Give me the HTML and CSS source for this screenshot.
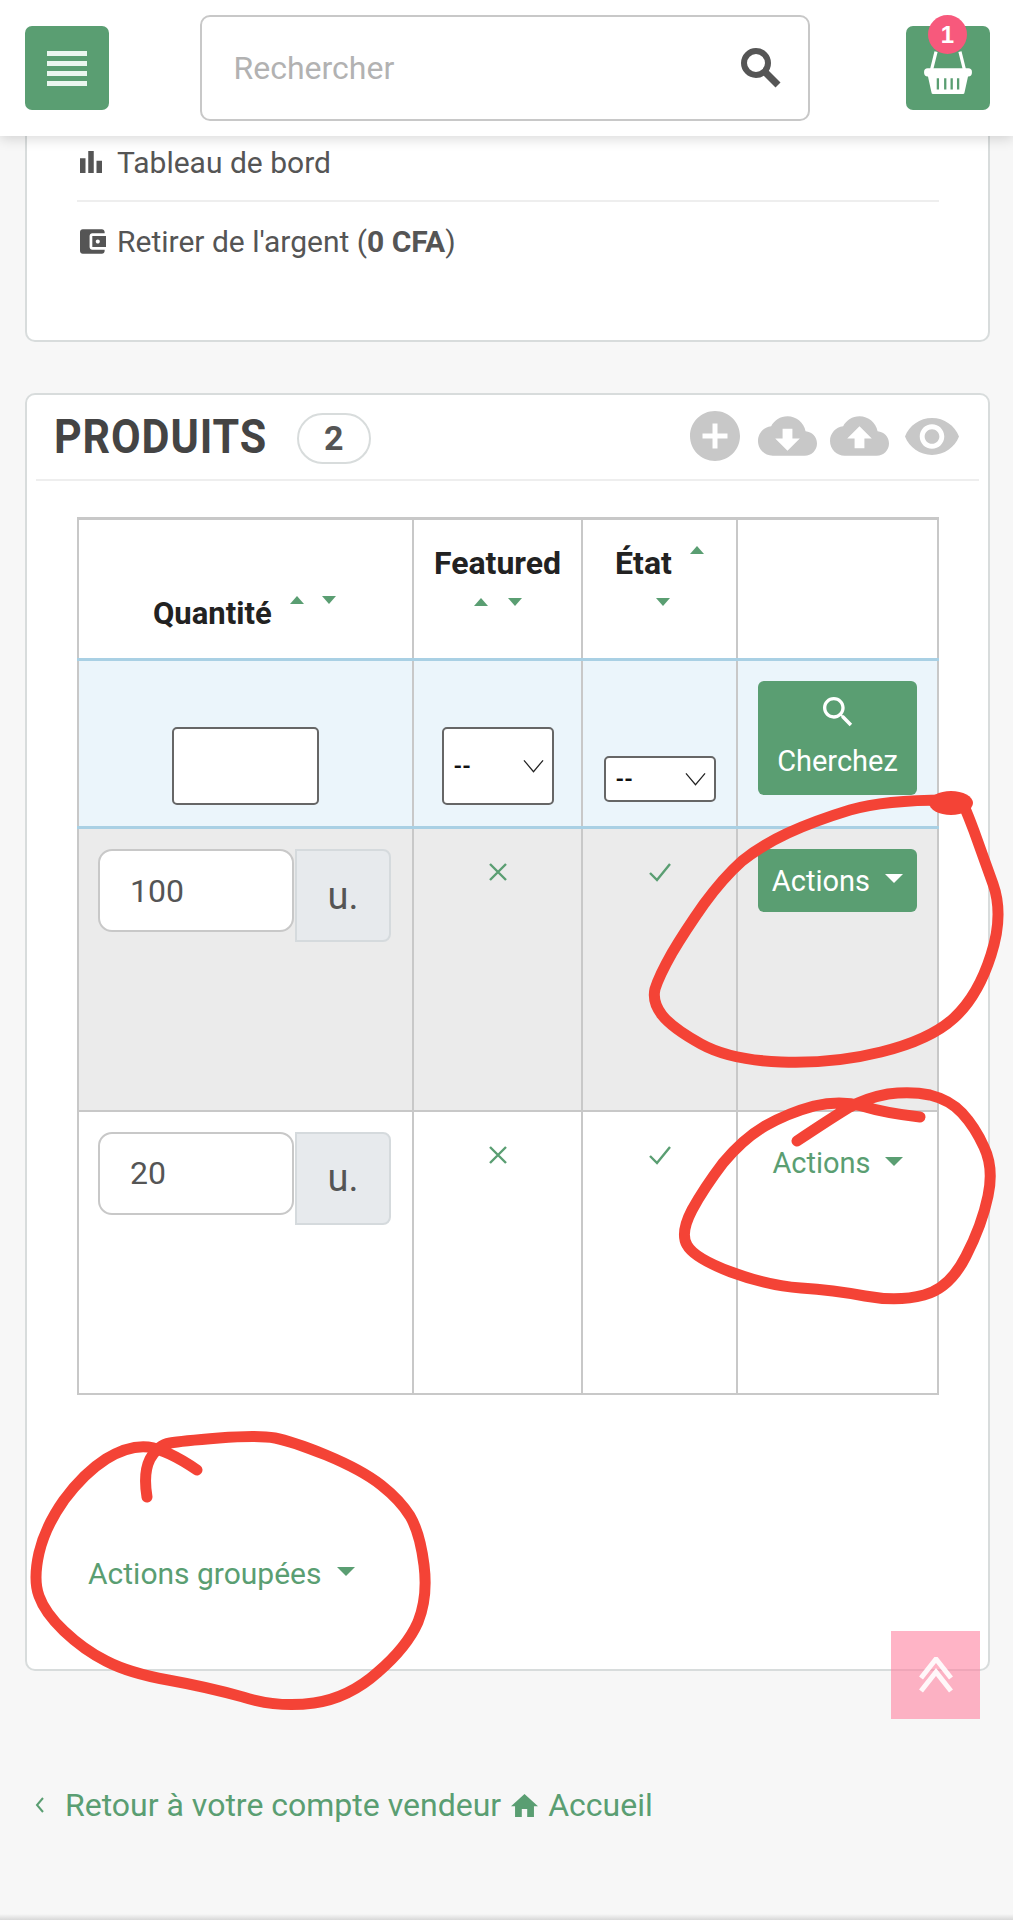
FILE: index.html
```html
<!DOCTYPE html>
<html lang="fr">

<head>
    <meta charset="UTF-8">
    <meta name="viewport" content="width=device-width, initial-scale=1.0">
    <title>Produits</title>
    <link rel="stylesheet" href="styles.css">
</head>

<body>
    <!-- Top bar -->
    <header class="topbar">
        <button class="square-btn" aria-label="Menu">
            <span class="menu-bars"><i></i><i></i><i></i><i></i></span>
        </button>
        <div class="search-box">
            <span class="search-text">Rechercher</span>
            <svg class="search-icon" viewBox="0 0 42 42">
                <circle cx="16" cy="16" r="12" fill="none" stroke="#555" stroke-width="6" />
                <path d="M25 25 38 38" fill="none" stroke="#555" stroke-width="7" />
            </svg>
        </div>
        <button class="square-btn cart-btn" aria-label="Panier">
            <svg class="basket" viewBox="0 0 52 50">
                <path d="M13 4 8 24M39 4l5 20" fill="none" stroke="#fff" stroke-width="3.5" />
                <rect x="0" y="22" width="52" height="9" rx="4" fill="#fff" />
                <path d="M4 30h44l-4 18a2 2 0 0 1-2 2H10a2 2 0 0 1-2-2z" fill="#fff" />
                <path d="M15 33v12M23 33v12M30 33v12M37 33v12" stroke="#5a9e72" stroke-width="2.5" />
            </svg>
            <span class="cart-count">1</span>
        </button>
    </header>

    <main class="content">
        <!-- Seller menu card -->
        <section class="card menu-card">
            <a class="menu-row">
                <svg class="menu-icon icon-bars" viewBox="3 3 18 18"><path d="M3 9h4.500v12H3zM9.750 3h4.500v18h-4.500zM16.500 11H21v10h-4.500z" /></svg>
                <span>Tableau de bord</span>
            </a>
            <a class="menu-row">
                <svg class="menu-icon icon-wallet" viewBox="3 3 19 18"><path d="M21 18v1c0 1.100-.9 2-2 2H5c-1.110 0-2-.9-2-2V5c0-1.100.89-2 2-2h14c1.100 0 2 .9 2 2v1h-9c-1.110 0-2 .9-2 2v8c0 1.100.89 2 2 2h9zm-9-2h10V8H12v8zm4-2.500c-.83 0-1.500-.67-1.500-1.500s.67-1.500 1.500-1.500 1.500.67 1.500 1.500-.67 1.500-1.500 1.500z" /></svg>
                <span>Retirer de l'argent (<b>0 CFA</b>)</span>
            </a>
        </section>

        <!-- Products card -->
        <section class="card products-card">
            <div class="card-head">
                <h2>PRODUITS</h2>
                <span class="count-pill">2</span>
                <div class="head-tools">
                    <svg class="tool-plus" viewBox="2 2 20 20"><path d="M12 2C6.480 2 2 6.480 2 12s4.480 10 10 10 10-4.480 10-10S17.520 2 12 2zm5 11h-4v4h-2v-4H7v-2h4V7h2v4h4v2z" /></svg>
                    <svg class="tool-cloud" viewBox="0 4 24 16"><path d="M19.350 10.040C18.670 6.590 15.640 4 12 4 9.110 4 6.600 5.640 5.350 8.040 2.340 8.360 0 10.910 0 14c0 3.310 2.690 6 6 6h13c2.760 0 5-2.240 5-5 0-2.640-2.050-4.780-4.650-4.960zM17 13l-5 5-5-5h3V9h4v4h3z" /></svg>
                    <svg class="tool-cloud" viewBox="0 4 24 16"><path d="M19.350 10.040C18.670 6.590 15.640 4 12 4 9.110 4 6.600 5.640 5.350 8.040 2.340 8.360 0 10.910 0 14c0 3.310 2.690 6 6 6h13c2.760 0 5-2.240 5-5 0-2.640-2.050-4.780-4.650-4.960zM14 13v4h-4v-4H7l5-5 5 5h-3z" /></svg>
                    <svg class="tool-eye" viewBox="1 4.500 22 15"><path d="M12 4.500C7 4.500 2.730 7.610 1 12c1.730 4.390 6 7.500 11 7.500s9.270-3.110 11-7.500c-1.730-4.390-6-7.500-11-7.500zM12 17c-2.760 0-5-2.240-5-5s2.240-5 5-5 5 2.240 5 5-2.240 5-5 5zm0-8c-1.660 0-3 1.340-3 3s1.340 3 3 3 3-1.340 3-3-1.340-3-3-3z" /></svg>
                </div>
            </div>

            <table class="products-table">
                <colgroup>
                    <col class="col-qty">
                    <col class="col-featured">
                    <col class="col-state">
                    <col class="col-actions">
                </colgroup>
                <thead>
                    <tr class="head-row">
                        <th>
                            <div class="th-inline">Quantité <span class="sort-up"></span><span class="sort-down"></span></div>
                        </th>
                        <th>
                            <div class="th-stack">Featured
                                <div class="sort-pair"><span class="sort-up"></span><span class="sort-down"></span></div>
                            </div>
                        </th>
                        <th>
                            <div class="th-stack">
                                <div class="state-title">État <span class="sort-up"></span></div>
                                <div class="sort-pair state-down"><span class="sort-down"></span></div>
                            </div>
                        </th>
                        <th></th>
                    </tr>
                    <tr class="filter-row">
                        <td class="filter-qty"><input class="filter-input" type="text"></td>
                        <td>
                            <div class="select-wrap tall">
                                <span>--</span>
                                <svg viewBox="0 0 22 14"><path d="M1 1 11 13 21 1" fill="none" stroke="#222" stroke-width="1.300" /></svg>
                            </div>
                        </td>
                        <td>
                            <div class="select-wrap short">
                                <span>--</span>
                                <svg viewBox="0 0 22 14"><path d="M1 1 11 13 21 1" fill="none" stroke="#222" stroke-width="1.300" /></svg>
                            </div>
                        </td>
                        <td class="filter-action">
                            <button class="green-btn search-btn">
                                <svg viewBox="3 3 18 18"><path d="M15.500 14h-.79l-.28-.27C15.410 12.590 16 11.110 16 9.500 16 5.910 13.090 3 9.500 3S3 5.910 3 9.500 5.910 16 9.500 16c1.610 0 3.090-.59 4.230-1.570l.27.28v.79l5 4.990L20.490 19l-4.990-5zm-6 0C7.010 14 5 11.990 5 9.500S7.010 5 9.500 5 14 7.010 14 9.500 11.990 14 9.500 14z" /></svg>
                                Cherchez
                            </button>
                        </td>
                    </tr>
                </thead>
                <tbody>
                    <tr class="item-row odd">
                        <td>
                            <div class="qty-group">
                                <span class="qty-value">100</span>
                                <span class="qty-unit">u.</span>
                            </div>
                        </td>
                        <td class="mark-cell"><svg class="mark" viewBox="0 0 20 20"><path d="M2 2 18 18M18 2 2 18" /></svg></td>
                        <td class="mark-cell"><svg class="mark check" viewBox="0 0 24 20"><path d="M2 11 9 18 22 2" /></svg></td>
                        <td class="action-cell"><button class="green-btn action-btn">Actions <span class="caret"></span></button></td>
                    </tr>
                    <tr class="item-row">
                        <td>
                            <div class="qty-group">
                                <span class="qty-value">20</span>
                                <span class="qty-unit">u.</span>
                            </div>
                        </td>
                        <td class="mark-cell"><svg class="mark" viewBox="0 0 20 20"><path d="M2 2 18 18M18 2 2 18" /></svg></td>
                        <td class="mark-cell"><svg class="mark check" viewBox="0 0 24 20"><path d="M2 11 9 18 22 2" /></svg></td>
                        <td class="action-cell"><a class="action-link">Actions <span class="caret"></span></a></td>
                    </tr>
                </tbody>
            </table>

            <a class="bulk-actions">Actions groupées <span class="caret"></span></a>
        </section>

        <!-- Links under the card -->
        <nav class="back-links">
            <svg class="back-chevron" viewBox="0 0 10 18"><path d="M8 2 2 9l6 7" /></svg>
            <a>Retour à votre compte vendeur</a>
            <svg class="home-icon" viewBox="2 3 20 17"><path d="M10 20v-6h4v6h5v-8h3L12 3 2 12h3v8z" /></svg>
            <a>Accueil</a>
        </nav>
    </main>

    <div class="page-end"></div>

    <!-- Back to top -->
    <a class="to-top" aria-label="Haut de page">
        <svg viewBox="0 0 36 36"><path d="M3 21 18 2l15 19M3 34l15-19 15 19" /></svg>
    </a>

    <!-- Red marks drawn by hand over the screenshot -->
    <svg class="scribbles" viewBox="0 0 1013 1920">
        <path d="M946 800Q885 800 850 810Q814 821 788 833Q762 845 742 861Q723 878 704 904Q685 931 672 953Q659 976 655 989Q652 1002 662 1015Q672 1028 701 1044Q730 1060 781 1062Q833 1064 881 1052Q930 1040 954 1018Q978 996 991 955Q1004 915 993 884Q982 853 974 831Q968 815 964 806" />
        <ellipse cx="951" cy="803" rx="22" ry="12" />
        <path d="M920 1117Q885 1113 862 1106Q840 1100 814 1106Q788 1113 765 1126Q743 1139 723 1163Q704 1188 692 1210Q680 1233 687 1245Q694 1258 731 1272Q769 1286 801 1288Q833 1290 865 1296Q898 1302 924 1295Q950 1288 966 1256Q982 1225 988 1196Q994 1168 984 1147Q975 1127 962 1113Q950 1100 930 1095Q911 1091 888 1094Q866 1098 848 1108Q830 1119 797 1141" />
        <path d="M147 1497Q143 1473 150 1459Q158 1445 170 1443Q181 1441 219 1438Q258 1435 275 1438Q291 1441 326 1455Q362 1470 381 1485Q400 1500 410 1516Q420 1533 424 1565Q428 1597 418 1622Q407 1647 378 1672Q349 1698 314 1703Q278 1708 243 1697Q207 1687 168 1680Q129 1673 106 1661Q84 1650 64 1631Q45 1613 39 1596Q33 1580 39 1553Q45 1527 64 1500Q84 1473 106 1459Q129 1445 148 1447Q168 1450 197 1470" />
    </svg>
</body>

</html>
```

FILE: styles.css
```css
* {
    box-sizing: border-box;
}

body {
    position: relative;
    display: flex;
    flex-direction: column;
    width: 1013px;
    height: 1920px;
    margin: 0;
    overflow: hidden;
    background-color: #f7f7f7;
    font-family: Roboto, "Liberation Sans", sans-serif;
    color: #555;
}

/* Top bar */
.topbar {
    position: relative;
    z-index: 2;
    display: flex;
    flex-shrink: 0;
    align-items: center;
    justify-content: space-between;
    height: 136px;
    padding: 0 23px 0 25px;
    background-color: #fff;
    box-shadow: 0 3px 12px rgba(0, 0, 0, 0.15);
}

.square-btn {
    position: relative;
    display: flex;
    align-items: center;
    justify-content: center;
    width: 84px;
    height: 84px;
    padding: 0;
    background-color: #5a9e72;
    border: none;
    border-radius: 7px;
}

.menu-bars {
    display: flex;
    flex-direction: column;
    gap: 5px;
    width: 40px;
}

.menu-bars i {
    display: block;
    height: 5px;
    background-color: #eaf6ef;
}

.search-box {
    display: flex;
    align-items: center;
    justify-content: space-between;
    width: 610px;
    height: 106px;
    margin-right: 6px;
    padding: 0 26px 0 32px;
    border: 2px solid #c8c8c8;
    border-radius: 10px;
}

.search-text {
    font-size: 32px;
    color: #b2b2b2;
}

.search-icon {
    width: 42px;
    height: 42px;
}

.basket {
    width: 48px;
    height: 46px;
    margin-top: 6px;
}

.cart-count {
    position: absolute;
    top: -11px;
    left: 22px;
    display: flex;
    align-items: center;
    justify-content: center;
    width: 39px;
    height: 39px;
    font-size: 24px;
    font-weight: 700;
    color: #fff;
    background-color: #f7597c;
    border-radius: 50%;
}

/* Cards */
.content {
    display: flex;
    flex-direction: column;
    padding: 0 23px 0 25px;
}

.card {
    background-color: #fff;
    border: 2px solid #d8dcdc;
    border-radius: 10px;
}

.menu-card {
    height: 206px;
    padding: 0 49px 0 50px;
    border-top: none;
    border-radius: 0 0 10px 10px;
}

.menu-row {
    display: flex;
    align-items: center;
    padding-left: 3px;
    font-size: 30px;
    color: #555;
}

.menu-row:first-child {
    height: 66px;
    padding-bottom: 12px;
    border-bottom: 2px solid #eee;
}

.menu-row + .menu-row {
    height: 78px;
    padding-top: 1px;
}

.menu-icon {
    flex-shrink: 0;
    fill: #555;
}

.icon-bars {
    width: 22px;
    height: 22px;
    margin-right: 15px;
}

.icon-wallet {
    width: 26px;
    height: 25px;
    margin-right: 11px;
}

.products-card {
    height: 1278px;
    margin-top: 51px;
    padding: 0 9px;
}

.card-head {
    display: flex;
    align-items: center;
    height: 86px;
    padding: 0 20px 2px 18px;
    border-bottom: 2px solid #eee;
}

.card-head h2 {
    margin: 0 -29px 0 0;
    font-size: 49px;
    font-weight: 700;
    letter-spacing: 1px;
    color: #444;
    transform: scaleX(0.878);
    transform-origin: left center;
}

.count-pill {
    display: flex;
    align-items: center;
    justify-content: center;
    width: 74px;
    height: 51px;
    margin: 4px 0 0 29px;
    font-size: 34px;
    font-weight: 700;
    color: #555;
    border: 2px solid #d8dcdc;
    border-radius: 26px;
}

.head-tools {
    display: flex;
    align-items: center;
    margin-left: auto;
    fill: #c8c8c8;
}

.tool-plus {
    width: 50px;
    height: 50px;
}

.tool-cloud {
    width: 59px;
    height: 40px;
    margin-left: 13px;
}

.tool-plus + .tool-cloud {
    margin-left: 18px;
}

.tool-eye {
    width: 54px;
    height: 37px;
    margin-left: 16px;
}

/* Table */
.products-table {
    width: 860px;
    margin: 36px 0 0 41px;
    border-collapse: collapse;
    table-layout: fixed;
}

.col-qty {
    width: 335px;
}

.col-featured {
    width: 169px;
}

.col-state {
    width: 155px;
}

.col-actions {
    width: 201px;
}

.products-table th,
.products-table td {
    padding: 0;
    border: 2px solid #c8c8c8;
}

.head-row th {
    height: 141px;
    vertical-align: bottom;
    font-size: 32px;
    font-weight: 700;
    color: #222;
    border-top-width: 3px;
    border-bottom: 3px solid #a9d0e4;
}

.th-inline {
    display: flex;
    align-items: center;
    gap: 18px;
    padding: 0 0 26px 74px;
    font-size: 31px;
}

.th-inline .sort-up,
.th-inline .sort-down {
    margin-bottom: 28px;
}

.th-stack {
    display: flex;
    flex-direction: column;
    align-items: center;
    padding-bottom: 52px;
}

.sort-pair {
    display: flex;
    gap: 20px;
    margin-top: 16px;
}

.state-title {
    display: flex;
    align-items: flex-start;
    gap: 18px;
}

.state-title .sort-up {
    margin-top: 2px;
}

.state-down {
    margin-left: 6px;
}

.sort-up,
.sort-down {
    display: inline-block;
    width: 0;
    height: 0;
    border-left: 7px solid transparent;
    border-right: 7px solid transparent;
}

.sort-up {
    border-bottom: 8px solid #5a9e72;
}

.sort-down {
    border-top: 8px solid #5a9e72;
}

.filter-row td {
    height: 168px;
    vertical-align: bottom;
    text-align: center;
    background-color: #ebf5fb;
    border-bottom: 3px solid #a9d0e4;
}

.filter-input {
    display: block;
    width: 147px;
    height: 78px;
    margin: 0 0 21px 93px;
    background-color: #fff;
    border: 2px solid #666;
    border-radius: 5px;
}

.select-wrap {
    display: flex;
    align-items: center;
    justify-content: space-between;
    width: 112px;
    margin: 0 auto;
    padding: 0 8px 0 10px;
    font-size: 22px;
    font-weight: 700;
    color: #111;
    background-color: #fff;
    border: 2px solid #666;
    border-radius: 5px;
}

.select-wrap.tall {
    height: 78px;
    margin-bottom: 21px;
}

.select-wrap.short {
    height: 46px;
    margin-bottom: 24px;
}

.select-wrap svg {
    width: 21px;
    height: 14px;
}

.filter-action.filter-action {
    vertical-align: top;
    padding: 20px 20px 0;
}

.green-btn {
    width: 159px;
    padding: 0;
    font-family: inherit;
    font-size: 29px;
    color: #fff;
    background-color: #5a9e72;
    border: none;
    border-radius: 6px;
}

.search-btn {
    display: flex;
    flex-direction: column;
    align-items: center;
    gap: 17px;
    height: 114px;
    padding-top: 16px;
    line-height: 34px;
}

.search-btn svg {
    width: 30px;
    height: 30px;
    fill: #fff;
}

.item-row td {
    height: 283px;
    vertical-align: top;
}

.item-row.odd td {
    background-color: #ebebeb;
}

.qty-group {
    display: flex;
    align-items: flex-start;
    gap: 1px;
    padding: 20px 0 0 19px;
}

.qty-value {
    display: flex;
    align-items: center;
    width: 196px;
    height: 83px;
    padding-left: 30px;
    font-size: 32px;
    color: #555;
    background-color: #fff;
    border: 2px solid #c8c8c8;
    border-radius: 14px;
}

.qty-unit {
    display: flex;
    align-items: center;
    justify-content: center;
    width: 96px;
    height: 93px;
    font-size: 38px;
    color: #555;
    background-color: #e7eaed;
    border: 2px solid #d5dadd;
    border-radius: 0 8px 8px 0;
}

.mark-cell {
    text-align: center;
}

.mark {
    display: block;
    width: 20px;
    height: 20px;
    margin: 33px auto 0;
    fill: none;
    stroke: #5a9e72;
    stroke-width: 2.4;
}

.mark.check {
    width: 24px;
}

.products-table .action-cell {
    padding: 20px 20px 0;
}

.action-btn {
    height: 63px;
}

.caret {
    display: inline-block;
    width: 0;
    height: 0;
    margin-left: 8px;
    vertical-align: 8px;
    border-left: 9px solid transparent;
    border-right: 9px solid transparent;
    border-top: 9px solid currentColor;
}

.action-link {
    display: flex;
    align-items: center;
    justify-content: center;
    height: 63px;
    font-size: 29px;
    color: #5a9e72;
}

.action-link .caret {
    margin: 0 0 4px 14px;
}

.bulk-actions {
    display: block;
    margin: 161px 0 0 52px;
    font-size: 30px;
    color: #5a9e72;
}

/* Links under the card */
.back-links {
    display: flex;
    align-items: center;
    gap: 10px;
    margin: 115px 0 0 10px;
    font-size: 32px;
    color: #5a9e72;
}

.back-chevron {
    width: 10px;
    height: 18px;
    margin-right: 10px;
    fill: none;
    stroke: #5a9e72;
    stroke-width: 2;
}

.home-icon {
    width: 27px;
    height: 23px;
    fill: #5a9e72;
}

.page-end {
    height: 6px;
    margin-top: auto;
    background: linear-gradient(#f7f7f7, #d8d8d8);
}

/* Back to top */
.to-top {
    position: absolute;
    top: 1631px;
    left: 891px;
    z-index: 2;
    display: flex;
    align-items: center;
    justify-content: center;
    width: 89px;
    height: 88px;
    background-color: rgba(255, 130, 160, 0.6);
}

.to-top svg {
    width: 36px;
    height: 36px;
    fill: none;
    stroke: rgba(255, 255, 255, 0.9);
    stroke-width: 5;
}

/* Hand drawn marks */
.scribbles {
    position: absolute;
    top: 0;
    left: 0;
    z-index: 3;
    width: 1013px;
    height: 1920px;
    pointer-events: none;
}

.scribbles path {
    fill: none;
    stroke: #f44336;
    stroke-width: 11;
    stroke-linecap: round;
    stroke-linejoin: round;
}

.scribbles ellipse {
    fill: #f44336;
}
```
